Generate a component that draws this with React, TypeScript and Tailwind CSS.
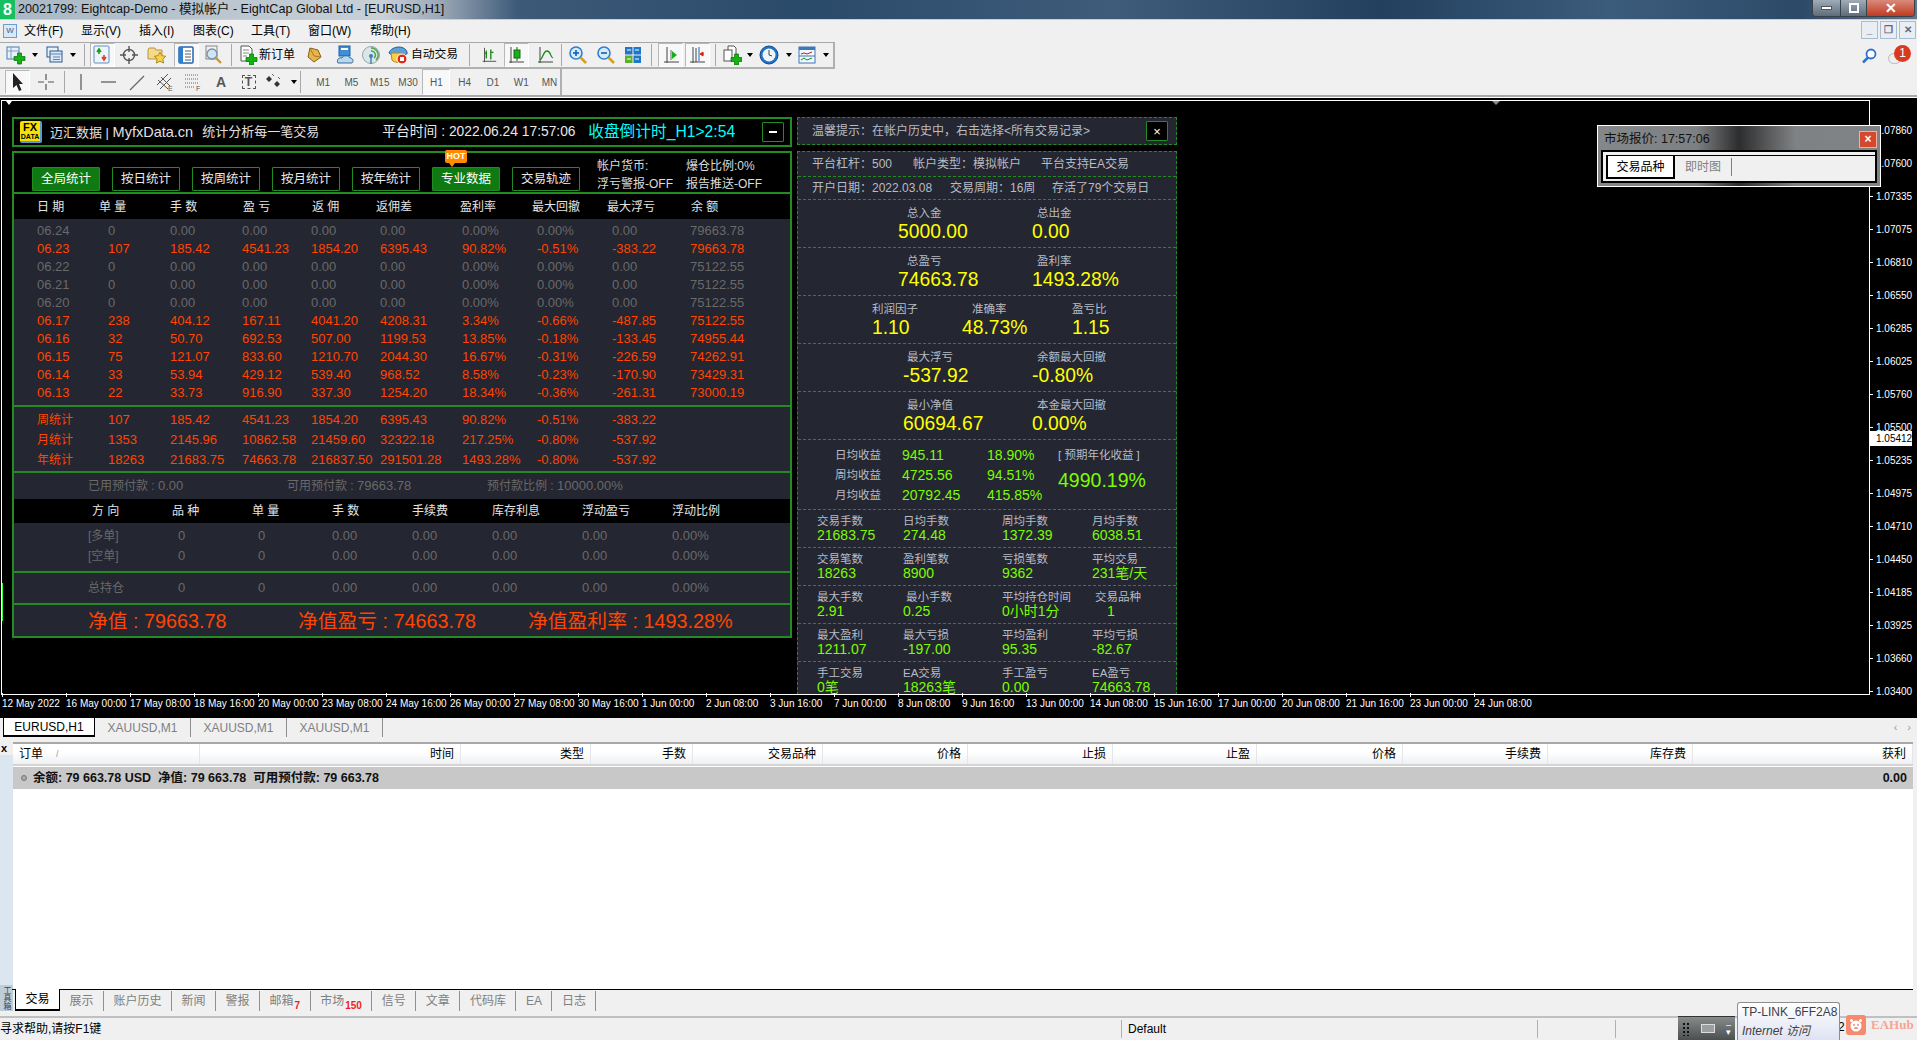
import React from "react";

function Dd() {
  return <div className="w-0 h-0 border-x-[3px] border-x-transparent border-t-[4px] border-t-black" />;
}
function Sep() {
  return <div className="w-px h-[22px] bg-[#a8a8a8]" />;
}
function Slot({ cls, active, children }: { cls: string; active?: boolean; children?: React.ReactNode }) {
  return (
    <div className={`${cls} h-full flex items-center justify-center shrink-0`}>
      {active ? (
        <div className="w-[25px] h-[24px] flex items-center justify-center border border-t-[#b8b8b8] border-l-[#b8b8b8] border-r-white border-b-white bg-[#f8f8f8]">{children}</div>
      ) : children}
    </div>
  );
}
const Ico = ({ children, s = 20 }: { children: React.ReactNode; s?: number }) => (
  <svg width={s} height={s} viewBox="0 0 20 20" fill="none">{children}</svg>
);
const Plus = ({ x = 8, y = 8 }: { x?: number; y?: number }) => (
  <path transform={`translate(${x} ${y})`} d="M3.5 0h4v3.5H11v4H7.5V11h-4V7.5H0v-4h3.5z" fill="#12b312" stroke="#0a6a0a" strokeWidth=".7" />
);
const IChartAdd = () => (
  <Ico><rect x="1" y="2" width="12" height="12" fill="#e8f0f8" stroke="#4a7ab0" /><path d="M1 6h12M5 2v12" stroke="#7aa0c8" /><Plus x={8} y={8} /></Ico>
);
const IProfiles = () => (
  <Ico><rect x="2" y="2" width="11" height="10" fill="#e8f0f8" stroke="#2a5a90" /><rect x="5" y="6" width="12" height="11" fill="#dce8f4" stroke="#2a5a90" /><path d="M5 9h12M8 12h7M8 14.5h7" stroke="#5a85b5" /></Ico>
);
const IMarket = () => (
  <Ico><rect x="2" y="1" width="15" height="17" rx="1" fill="#eef4fb" stroke="#5f8fc0" /><path d="M7 5v4M5 7l2-3 2 3" stroke="#16a016" strokeWidth="1.6" /><path d="M12 14v-4M10 12l2 3 2-3" stroke="#e0401a" strokeWidth="1.6" /></Ico>
);
const ICross = () => (
  <Ico><circle cx="10" cy="10" r="5.5" stroke="#555" strokeWidth="1.4" /><path d="M10 1v6M10 13v6M1 10h6M13 10h6" stroke="#555" strokeWidth="1.4" /></Ico>
);
const IFolderStar = () => (
  <Ico><path d="M1 5l1-2h6l1 2h6v9H1z" fill="#f4d98a" stroke="#b99440" /><path d="M13 7l1.8 3.7 4 .6-2.9 2.8.7 4L13 16.2 9.400 18.100l.7-4-2.900-2.800 4-.6z" fill="#f6d24a" stroke="#b28a1e" /></Ico>
);
const INav = () => (
  <Ico><rect x="3" y="2" width="14" height="16" rx="1" fill="#fff" stroke="#1f66b0" strokeWidth="1.5" /><rect x="3" y="2" width="4" height="16" fill="#2f7fd0" /><path d="M9 6h6M9 9h6M9 12h6M9 15h6" stroke="#5a5a5a" /></Ico>
);
const ITester = () => (
  <Ico><rect x="3" y="1" width="11" height="13" fill="#f0f0f0" stroke="#888" /><circle cx="9" cy="9" r="5" fill="#cfe4f5" stroke="#7a8ea0" strokeWidth="1.3" /><path d="M13 13l5 5" stroke="#c79a2a" strokeWidth="2.400" /></Ico>
);
const IOrder = () => (
  <Ico><path d="M3 1h8l3 3v12H3z" fill="#fff" stroke="#555" /><path d="M5 5h6M5 8h6M5 11h4" stroke="#888" /><Plus x={8} y={9} /></Ico>
);
const IDiamond = () => (
  <Ico><path d="M6 3l8 2 3 7-7 5-6-5z" fill="#e3b54a" stroke="#8a5e14" /><path d="M6 3l4 8 7 1" stroke="#a97a20" /></Ico>
);
const IChat = () => (
  <Ico><rect x="4" y="1" width="11" height="10" fill="#3f8fd8" stroke="#1f5fa0" /><rect x="6" y="3" width="7" height="2" fill="#fff" /><path d="M3 18c-2-3 1-6 4-5 1-3 7-3 8 0 3 0 4 3 2 5z" fill="#b8d8f0" stroke="#3a6a9a" /></Ico>
);
const ISignal = () => (
  <Ico><circle cx="10" cy="10" r="8.500" fill="#dbe6e6" stroke="#8fa8a8" /><path d="M10 3a7 7 0 0 1 5 12M10 6a4 4 0 0 1 3 7" stroke="#4ea04e" strokeWidth="1.4" /><circle cx="10" cy="11" r="2" fill="#2f7fd0" /><path d="M10 11v8" stroke="#4a80b8" strokeWidth="1.5" /></Ico>
);
const IAuto = () => (
  <Ico><path d="M1 8c1-4 6-6 10-6s7 2 8 5-3 3-4 3H4z" fill="#5aa0dc" stroke="#2a5f90" /><path d="M3 8l1 7c2 3 8 3 10 0V8z" fill="#f6cf4a" stroke="#b38a1a" /><circle cx="14" cy="14" r="5" fill="#e02818" stroke="#fff" /><rect x="12" y="12" width="4" height="4" fill="#fff" /></Ico>
);
const IBars = () => (
  <Ico><path d="M3 17h15M5 2v16" stroke="#444" /><path d="M7 14V5M12 15V4M7 8h-2M12 7h3" stroke="#148a14" strokeWidth="1.5" /></Ico>
);
const ICandle = () => (
  <Ico><path d="M3 17h15M5 2v16" stroke="#444" /><path d="M11 2v14" stroke="#146014" /><rect x="8" y="5" width="6" height="8" fill="#18b018" stroke="#0e6a0e" /></Ico>
);
const ILine = () => (
  <Ico><path d="M3 17h15M5 2v16" stroke="#444" /><path d="M5 15c3-1 3-9 7-9s3 6 6 7" stroke="#148a14" strokeWidth="1.3" /></Ico>
);
const IZoom = ({ plus }: { plus?: boolean }) => (
  <Ico><circle cx="8" cy="8" r="6" fill="#d6ebfa" stroke="#2f7fd0" strokeWidth="1.6" /><path d="M5 8h6" stroke="#1060b0" strokeWidth="1.6" />{plus && <path d="M8 5v6" stroke="#1060b0" strokeWidth="1.6" />}<path d="M12.500 12.500l5.500 5.500" stroke="#d6a020" strokeWidth="2.600" /></Ico>
);
const IGrid = () => (
  <Ico><rect x="2" y="2" width="7.500" height="7.500" fill="#1f77c8" /><rect x="10.500" y="2" width="7.500" height="7.500" fill="#1f77c8" /><rect x="2" y="10.500" width="7.500" height="7.500" fill="#5ab02a" /><rect x="10.500" y="10.500" width="7.500" height="7.500" fill="#1f77c8" /><path d="M4 5h4M12 5h4M4 14h4M12 14h4" stroke="#fff" /></Ico>
);
const IAxisRight = () => (
  <Ico><path d="M3 17h15M6 2v16" stroke="#444" /><path d="M10 5v10" stroke="#666" /><path d="M11 6l5 4-5 4z" fill="#18b018" /></Ico>
);
const IAxisShift = () => (
  <Ico><path d="M3 17h15M6 2v16M9 3v14" stroke="#444" /><path d="M12 2v14" stroke="#1f66b0" /><path d="M17 9h-3M16 7l-3 2 3 2z" fill="#d02810" stroke="#d02810" /></Ico>
);
const ICopy = () => (
  <Ico><path d="M6 1h6l2 2v11H6z" fill="#fff" stroke="#555" /><rect x="2" y="5" width="8" height="11" fill="#fff" stroke="#555" /><Plus x={9} y={9} /></Ico>
);
const IClock = () => (
  <Ico><circle cx="10" cy="10" r="9" fill="#1f72c8" stroke="#0d4a90" /><circle cx="10" cy="10" r="6.500" fill="#eef4fa" /><path d="M10 5v5l3 1" stroke="#444" /></Ico>
);
const ITemplate = () => (
  <Ico><rect x="2" y="2" width="16" height="16" fill="#f4f8fc" stroke="#3a78b8" /><rect x="2" y="2" width="16" height="3" fill="#3a78b8" /><path d="M2 11h16" stroke="#3a78b8" /><path d="M4 9l3-1 3 1 5-2" stroke="#c02010" /><path d="M4 15l3-2 3 2 5-2" stroke="#149014" /></Ico>
);
const IPointer = () => (
  <svg width="12" height="18" viewBox="0 0 12 18"><path d="M1 0v15l3.500-3 2.500 6 2.500-1-2.500-6H11z" fill="#222" /></svg>
);
const ICrossThin = () => (
  <Ico><path d="M10 2v6M10 12v6M2 10h6M12 10h6" stroke="#555" strokeWidth="1.200" /></Ico>
);
const IVLine = () => <Ico><path d="M10 2v16" stroke="#555" strokeWidth="1.200" /></Ico>;
const IHLine = () => <Ico><path d="M2 10h15" stroke="#555" strokeWidth="1.200" /></Ico>;
const ITrend = () => <Ico><path d="M3 18L17 4" stroke="#666" strokeWidth="1.200" /></Ico>;
const IChannel = () => (
  <Ico><path d="M2 13L13 2M5 17L16 6M3 8l10 9M6 5l9 9" stroke="#555" /><text x="13" y="19" fontSize="7" fill="#555" fontFamily="Liberation Sans">E</text></Ico>
);
const IFibo = () => (
  <Ico><path d="M2 3h14M2 7h14M2 11h14M2 15h10" stroke="#666" strokeDasharray="1 1" /><text x="13" y="19" fontSize="7" fill="#555" fontFamily="Liberation Sans">F</text></Ico>
);
const IMore = () => (
  <Ico><path d="M4 4l3 3-3 3-3-3zM12 9l3 3-3 3-3-3z" fill="#333" /><path d="M7 2l2 2M13 5l2 2" stroke="#666" /></Ico>
);

function Toolbar1() {
  return (
    <div className="h-[27px] w-[835px] pl-[4px] flex items-center border-t border-t-[#a8a8a8] border-b-2 border-b-[#b0b0b0] border-r-2 border-r-[#b0b0b0]">
      <Slot cls="w-[24px]"><IChartAdd /></Slot>
      <Slot cls="w-[14px]"><Dd /></Slot>
      <Slot cls="w-[25px]"><IProfiles /></Slot>
      <Slot cls="w-[12px]"><Dd /></Slot>
      <Slot cls="w-[10px]"><Sep /></Slot>
      <Slot cls="w-[26px]" active><IMarket /></Slot>
      <Slot cls="w-[28px]"><ICross /></Slot>
      <Slot cls="w-[28px]"><IFolderStar /></Slot>
      <Slot cls="w-[30px]" active><INav /></Slot>
      <Slot cls="w-[24px]"><ITester /></Slot>
      <Slot cls="w-[12px]"><Sep /></Slot>
      <Slot cls="w-[22px]"><IOrder /></Slot>
      <Slot cls="w-[36px] text-[12px] text-black"><span className="whitespace-nowrap">新订单</span></Slot>
      <Slot cls="w-[38px]"><IDiamond /></Slot>
      <Slot cls="w-[24px]"><IChat /></Slot>
      <Slot cls="w-[28px]"><ISignal /></Slot>
      <Slot cls="w-[26px]"><IAuto /></Slot>
      <Slot cls="w-[47px] text-[11.800px] text-black"><span className="whitespace-nowrap">自动交易</span></Slot>
      <Slot cls="w-[22px]"><Sep /></Slot>
      <Slot cls="w-[18px]"><IBars /></Slot>
      <Slot cls="w-[36px]" active><ICandle /></Slot>
      <Slot cls="w-[22px]"><ILine /></Slot>
      <Slot cls="w-[10px]"><Sep /></Slot>
      <Slot cls="w-[24px]"><IZoom plus /></Slot>
      <Slot cls="w-[32px]"><IZoom /></Slot>
      <Slot cls="w-[22px]"><IGrid /></Slot>
      <Slot cls="w-[14px]"><Sep /></Slot>
      <Slot cls="w-[25px]" active><IAxisRight /></Slot>
      <Slot cls="w-[28px]" active><IAxisShift /></Slot>
      <Slot cls="w-[8px]"><Sep /></Slot>
      <Slot cls="w-[26px]"><ICopy /></Slot>
      <Slot cls="w-[9px]"><Dd /></Slot>
      <Slot cls="w-[30px]"><IClock /></Slot>
      <Slot cls="w-[9px]"><Dd /></Slot>
      <Slot cls="w-[28px]"><ITemplate /></Slot>
      <Slot cls="w-[9px]"><Dd /></Slot>
    </div>
  );
}

function Toolbar2() {
  const periods = ["M1", "M5", "M15", "M30", "H1", "H4", "D1", "W1", "MN"];
  return (
    <div className="h-[26px] w-[562px] pl-[4px] flex items-center border-r-2 border-r-[#b0b0b0]">
      <Slot cls="w-[27px]" active><IPointer /></Slot>
      <Slot cls="w-[30px]"><ICrossThin /></Slot>
      <Slot cls="w-[6px]"><Sep /></Slot>
      <Slot cls="w-[28px]"><IVLine /></Slot>
      <Slot cls="w-[28px]"><IHLine /></Slot>
      <Slot cls="w-[28px]"><ITrend /></Slot>
      <Slot cls="w-[27px]"><IChannel /></Slot>
      <Slot cls="w-[29px]"><IFibo /></Slot>
      <Slot cls="w-[28px] text-[14px] text-[#555] font-bold"><span>A</span></Slot>
      <Slot cls="w-[27px]"><span className="w-[14px] h-[14px] border border-dashed border-[#555] text-[12px] leading-[12px] text-center font-bold text-[#555]">T</span></Slot>
      <Slot cls="w-[26px]"><IMore /></Slot>
      <Slot cls="w-[12px]"><Dd /></Slot>
      <Slot cls="w-[9px] justify-start"><Sep /></Slot>
      {periods.map((p) => (
        <div key={p} className={`w-[28.300px] h-full flex items-center justify-center shrink-0 text-[10px] text-[#555] ${p === "H1" ? "border border-t-[#b8b8b8] border-l-[#b8b8b8] border-r-white border-b-white bg-[#f8f8f8]" : ""}`}>{p}</div>
      ))}
    </div>
  );
}

const prices = ["1.07860", "1.07600", "1.07335", "1.07075", "1.06810", "1.06550", "1.06285", "1.06025", "1.05760", "1.05500", "1.05235", "1.04975", "1.04710", "1.04450", "1.04185", "1.03925", "1.03660", "1.03400"];
const times = ["12 May 2022", "16 May 00:00", "17 May 08:00", "18 May 16:00", "20 May 00:00", "23 May 08:00", "24 May 16:00", "26 May 00:00", "27 May 08:00", "30 May 16:00", "1 Jun 00:00", "2 Jun 08:00", "3 Jun 16:00", "7 Jun 00:00", "8 Jun 08:00", "9 Jun 16:00", "13 Jun 00:00", "14 Jun 08:00", "15 Jun 16:00", "17 Jun 00:00", "20 Jun 08:00", "21 Jun 16:00", "23 Jun 00:00", "24 Jun 08:00"];

const rows = [
  ["06.24", "0", "0.00", "0.00", "0.00", "0.00", "0.00%", "0.00%", "0.00", "79663.78"],
  ["06.23", "107", "185.42", "4541.23", "1854.20", "6395.43", "90.82%", "-0.51%", "-383.22", "79663.78"],
  ["06.22", "0", "0.00", "0.00", "0.00", "0.00", "0.00%", "0.00%", "0.00", "75122.55"],
  ["06.21", "0", "0.00", "0.00", "0.00", "0.00", "0.00%", "0.00%", "0.00", "75122.55"],
  ["06.20", "0", "0.00", "0.00", "0.00", "0.00", "0.00%", "0.00%", "0.00", "75122.55"],
  ["06.17", "238", "404.12", "167.11", "4041.20", "4208.31", "3.34%", "-0.66%", "-487.85", "75122.55"],
  ["06.16", "32", "50.70", "692.53", "507.00", "1199.53", "13.85%", "-0.18%", "-133.45", "74955.44"],
  ["06.15", "75", "121.07", "833.60", "1210.70", "2044.30", "16.67%", "-0.31%", "-226.59", "74262.91"],
  ["06.14", "33", "53.94", "429.12", "539.40", "968.52", "8.58%", "-0.23%", "-170.90", "73429.31"],
  ["06.13", "22", "33.73", "916.90", "337.30", "1254.20", "18.34%", "-0.36%", "-261.31", "73000.19"],
];
const sums = [
  ["周统计", "107", "185.42", "4541.23", "1854.20", "6395.43", "90.82%", "-0.51%", "-383.22"],
  ["月统计", "1353", "2145.96", "10862.58", "21459.60", "32322.18", "217.25%", "-0.80%", "-537.92"],
  ["年统计", "18263", "21683.75", "74663.78", "216837.50", "291501.28", "1493.28%", "-0.80%", "-537.92"],
];
const gridCols = "grid grid-cols-[71px_62px_72px_69px_69px_82px_75px_75px_78px_1fr]";
const tabsBtn = ["全局统计", "按日统计", "按周统计", "按月统计", "按年统计", "专业数据", "交易轨迹"];

function Divider() {
  return <div className="h-[2px] bg-[#228B22] shrink-0" />;
}

function StatsPanel() {
  return (
    <div className="absolute left-[10px] top-[16px] w-[780px] flex flex-col gap-[4px] text-[13px] leading-[18px]">
      <div className="h-[30px] border-2 border-[#228B22] bg-black flex items-center relative">
        <div className="ml-[6px] w-[22px] h-[22px] rounded-[2px] bg-[#f5e000] border-r-2 border-b-2 border-r-[#5a9ad8] border-b-[#5a9ad8] flex flex-col items-center justify-center text-black font-bold leading-none">
          <span className="text-[11px] leading-[11px]">FX</span>
          <span className="text-[7px] leading-[8px]">DATA</span>
        </div>
        <span className="ml-[8px] text-[13px] text-[#e0e0e0] whitespace-nowrap">迈汇数据 | <span className="text-[14.500px]">MyfxData.cn</span></span>
        <span className="ml-[9px] text-[13px] text-[#e0e0e0] whitespace-nowrap">统计分析每一笔交易</span>
        <span className="ml-[63px] w-[206px] text-[13.800px] text-[#e8e8e8] whitespace-nowrap">平台时间 : 2022.06.24 17:57:06</span>
        <span className="text-[15.700px] text-[#00ffff] whitespace-nowrap">收盘倒计时_H1&gt;2:54</span>
        <div className="absolute left-[748px] top-[3px] w-[22px] h-[20px] border border-[#228B22] rounded-[1px] flex items-center justify-center">
          <div className="w-[8px] h-[2px] bg-white" />
        </div>
      </div>

      <div className="border-2 border-[#228B22] bg-[#242631] flex flex-col">
        <div className="h-[39px] bg-black relative flex items-end gap-[12px] pl-[18px] pb-[1px]">
          {tabsBtn.map((t, i) => (
            <div key={t} className={`w-[68px] h-[24px] shrink-0 flex items-center justify-center text-[12.500px] rounded-[1px] border border-[#228B22] text-[#e8e8e8] ${i === 0 || i === 5 ? "bg-[#0f7a12] text-white" : "bg-black"}`}>{t}</div>
          ))}
          <div className="absolute left-[431px] top-[-3px] w-[22px] h-[13px] rounded-[2px] bg-[#ff8c00] text-white text-[9px] leading-[13px] text-center font-bold">HOT</div>
          <div className="absolute left-[435px] top-[10px] w-0 h-0 border-x-[3px] border-x-transparent border-t-[4px] border-t-[#ff8c00]" />
          <div className="absolute left-[583px] top-[4px] text-[12px] leading-[18px] text-[#dcdcdc] whitespace-nowrap">帐户货币:<br />浮亏警报-OFF</div>
          <div className="absolute left-[672px] top-[4px] text-[12px] leading-[18px] text-[#dcdcdc] whitespace-nowrap">爆仓比例:0%<br />报告推送-OFF</div>
        </div>
        <Divider />
        <div className="h-[25px] bg-black pl-[23px] grid grid-cols-[62px_71px_73px_69px_64px_84px_72px_75px_84px_1fr] items-center text-[12px] text-[#e4e4e4]">
          {["日 期", "单 量", "手 数", "盈 亏", "返 佣", "返佣差", "盈利率", "最大回撤", "最大浮亏", "余 额"].map((h) => <span key={h}>{h}</span>)}
        </div>
        <div className="pt-[3px] pb-[3px] pl-[23px]">
          {rows.map((r) => {
            const zero = r[1] === "0";
            return (
              <div key={r[0]} className={`${gridCols} h-[18px] items-center ${zero ? "text-[#696969]" : "text-[#ff4500]"}`}>
                {r.map((c, i) => <span key={i}>{c}</span>)}
              </div>
            );
          })}
        </div>
        <Divider />
        <div className="pt-[3px] pb-[1px] pl-[23px]">
          {sums.map((r) => (
            <div key={r[0]} className={`${gridCols} h-[20px] items-center text-[#ff4500]`}>
              {r.map((c, i) => <span key={i} className={i === 0 ? "text-[12px]" : ""}>{c}</span>)}
            </div>
          ))}
        </div>
        <Divider />
        <div className="h-[26px] flex items-center pl-[74px] text-[#696969]">
          <span className="w-[199px] text-[12px]">已用预付款 : <span className="text-[13px]">0.00</span></span>
          <span className="w-[200px] text-[12px]">可用预付款 : <span className="text-[13px]">79663.78</span></span>
          <span className="text-[12px]">预付款比例 : <span className="text-[13px]">10000.00%</span></span>
        </div>
        <div className="h-[24px] bg-black pl-[74px] grid grid-cols-[84px_80px_80px_80px_80px_90px_90px_1fr] items-center text-[12px] text-[#e4e4e4]">
          {["方 向", "品 种", "单 量", "手 数", "手续费", "库存利息", "浮动盈亏", "浮动比例"].map((h, i) => <span key={h} className={i === 0 ? "ml-[4px]" : ""}>{h}</span>)}
        </div>
        <div className="pt-[3px] pb-[5px] pl-[74px] text-[#696969]">
          {["[多单]", "[空单]"].map((l) => (
            <div key={l} className="grid grid-cols-[84px_80px_80px_80px_80px_90px_90px_1fr] h-[20px] items-center">
              <span className="text-[12px]">{l}</span><span className="ml-[6px]">0</span><span className="ml-[6px]">0</span><span>0.00</span><span>0.00</span><span>0.00</span><span>0.00</span><span>0.00%</span>
            </div>
          ))}
        </div>
        <Divider />
        <div className="h-[30px] pl-[74px] text-[#696969] grid grid-cols-[84px_80px_80px_80px_80px_90px_90px_1fr] items-center">
          <span className="text-[12px]">总持仓</span><span className="ml-[6px]">0</span><span className="ml-[6px]">0</span><span>0.00</span><span>0.00</span><span>0.00</span><span>0.00</span><span>0.00%</span>
        </div>
        <Divider />
        <div className="h-[31px] flex items-center pl-[74px] text-[19.800px] leading-[24px] text-[#ff4500] whitespace-nowrap">
          <span className="w-[210px]">净值 : 79663.78</span>
          <span className="w-[230px]">净值盈亏 : 74663.78</span>
          <span>净值盈利率 : 1493.28%</span>
        </div>
      </div>
    </div>
  );
}

const lab = "text-[11.500px] leading-[14px] text-[#b8bcc4] whitespace-nowrap";
const big = "text-[19.300px] leading-[24px] text-[#ffff00] whitespace-nowrap";
const small = "text-[14px] leading-[14px] text-[#7cfc00] whitespace-nowrap";
const rowLine = "border-b border-dashed border-b-[#228B22]";

function Big2({ a, b, c, d, cls }: { a: string; b: string; c: string; d: string; cls: string }) {
  return (
    <div className={`h-[48px] ${rowLine} pt-[6px] pl-[100px] grid grid-cols-[134px_1fr]`}>
      <div><div className={`${lab} ml-[9px]`}>{a}</div><div className={`${big} ${cls}`}>{b}</div></div>
      <div><div className={`${lab} ml-[5px]`}>{c}</div><div className={big}>{d}</div></div>
    </div>
  );
}

function Small4({ items, last }: { items: [string, string][]; last?: boolean }) {
  return (
    <div className={`h-[38px] pt-[4px] pl-[19px] grid grid-cols-[86px_99px_90px_1fr] ${last ? "" : rowLine}`}>
      {items.map(([l, v]) => (
        <div key={l}>
          <div className={`${lab} ${l === "最小手数" ? "ml-[3px]" : ""} ${l === "交易品种" ? "ml-[3px]" : ""}`}>{l}</div>
          <div className={`${small} ${l === "交易品种" ? "ml-[15px]" : ""}`}>{v}</div>
        </div>
      ))}
    </div>
  );
}

function InfoPanel() {
  return (
    <div className="absolute left-[795px] top-[16px] w-[380px] text-[12px] flex flex-col gap-[6px]">
      <div className="h-[28px] bg-[#242631] border border-dashed border-[#228B22] pl-[14px] flex items-center relative text-[#b8bcc4]">
        <span className="text-[12px]">温馨提示：在帐户历史中，右击选择&lt;所有交易记录&gt;</span>
        <div className="absolute left-[348px] top-[3px] w-[22px] h-[20px] bg-black border border-[#228B22] rounded-[1px] flex items-center justify-center text-white text-[13px] leading-none">×</div>
      </div>
      <div className="bg-[#242631] border-x border-t border-dashed border-[#228B22]">
        <div className={`h-[25px] ${rowLine} pl-[14px] flex items-center text-[#b8bcc4]`}>
          <span className="w-[101px]">平台杠杆：500</span><span className="w-[128px]">帐户类型：模拟帐户</span><span>平台支持EA交易</span>
        </div>
        <div className={`h-[23px] ${rowLine} pl-[14px] flex items-center text-[#b8bcc4]`}>
          <span className="w-[138px]">开户日期：2022.03.08</span><span className="w-[102px]">交易周期：16周</span><span>存活了79个交易日</span>
        </div>
        <Big2 a="总入金" b="5000.00" c="总出金" d="0.00" cls="" />
        <Big2 a="总盈亏" b="74663.78" c="盈利率" d="1493.28%" cls="" />
        <div className={`h-[48px] ${rowLine} pt-[2px]`}>
          <div className="pl-[74px] grid grid-cols-[90px_110px_1fr]">
            <div><div className={`${lab} mt-[4px]`}>利润因子</div><div className={big}>1.10</div></div>
            <div><div className={`${lab} mt-[4px] ml-[10px]`}>准确率</div><div className={big}>48.73%</div></div>
            <div><div className={`${lab} mt-[4px]`}>盈亏比</div><div className={big}>1.15</div></div>
          </div>
        </div>
        <Big2 a="最大浮亏" b="-537.92" c="余额最大回撤" d="-0.80%" cls="ml-[5px]" />
        <Big2 a="最小净值" b="60694.67" c="本金最大回撤" d="0.00%" cls="ml-[5px]" />
        <div className={`h-[70px] ${rowLine} pt-[5px] flex`}>
          <div className="grid grid-cols-[83px_85px_71px] auto-rows-[20px] items-center">
            {[["日均收益", "945.11", "18.90%"], ["周均收益", "4725.56", "94.51%"], ["月均收益", "20792.45", "415.85%"]].map(([a, b, c]) => (
              <React.Fragment key={a}>
                <span className={`${lab} text-right`}>{a}</span>
                <span className={`${small} ml-[21px]`}>{b}</span>
                <span className={`${small} ml-[21px]`}>{c}</span>
              </React.Fragment>
            ))}
          </div>
          <div className="flex flex-col ml-[21px]">
            <span className={`${lab} h-[20px] flex items-center`}>[ 预期年化收益 ]</span>
            <span className="text-[19.500px] leading-[30px] text-[#7cfc00] whitespace-nowrap">4990.19%</span>
          </div>
        </div>
        <Small4 items={[["交易手数", "21683.75"], ["日均手数", "274.48"], ["周均手数", "1372.39"], ["月均手数", "6038.51"]]} />
        <Small4 items={[["交易笔数", "18263"], ["盈利笔数", "8900"], ["亏损笔数", "9362"], ["平均交易", "231笔/天"]]} />
        <Small4 items={[["最大手数", "2.91"], ["最小手数", "0.25"], ["平均持仓时间", "0小时1分"], ["交易品种", "1"]]} />
        <Small4 items={[["最大盈利", "1211.07"], ["最大亏损", "-197.00"], ["平均盈利", "95.35"], ["平均亏损", "-82.67"]]} />
        <Small4 last items={[["手工交易", "0笔"], ["EA交易", "18263笔"], ["手工盈亏", "0.00"], ["EA盈亏", "74663.78"]]} />
      </div>
    </div>
  );
}

function MarketWatch() {
  return (
    <div className="absolute left-[1597px] top-[27px] w-[284px] h-[62px] border border-white bg-[linear-gradient(90deg,#85888a_0%,#7d8082_35%,#2c2d2f_50%,#7f8284_70%,#808385_100%)] p-[3px] flex flex-col">
      <div className="h-[21px] flex items-center justify-between pl-[3px]">
        <span className="text-[12.500px] text-[#111]">市场报价: 17:57:06</span>
        <div className="w-[18px] h-[17px] bg-[#d5482e] border border-[#f0b0a0] text-white text-[12px] leading-[14px] text-center font-bold">×</div>
      </div>
      <div className="h-[33px] border-2 border-black bg-[#f0f0f0] pl-[3px] pt-[3px]">
        <div className="flex h-[23px] border-t border-t-black items-stretch">
          <div className="w-[69px] h-[23px] bg-white border-l-2 border-r-2 border-b-2 border-black text-[12px] flex items-center justify-center text-black">交易品种</div>
          <div className="w-[56px] text-[12px] flex items-center justify-center text-[#808080]">即时图</div>
          <div className="w-px h-[18px] mt-[2px] bg-[#808080]" />
        </div>
      </div>
    </div>
  );
}

function Chart() {
  return (
    <div className="relative h-[618px] bg-black flex flex-col shrink-0 text-white">
      <div className="flex h-[596px] pt-[2px] shrink-0">
        <div className="relative ml-px w-[1869px] h-[595px] border border-white overflow-hidden shrink-0">
          <div className="absolute left-[4px] top-0 w-0 h-0 border-x-[3px] border-x-transparent border-t-[4px] border-t-white" />
          <div className="absolute left-[1490px] top-0 w-0 h-0 border-x-[4px] border-x-transparent border-t-[4px] border-t-[#888]" />
          <div className="absolute left-0 top-[482px] w-px h-[38px] bg-[#33ff33]" />
          <StatsPanel />
          <InfoPanel />
        </div>
        <div className="relative flex-1 pt-[14px]">
          {prices.map((p) => (
            <div key={p} className="h-[33px] flex items-center text-[10px] leading-none">
              <span className="w-[3px] h-px bg-white mr-[3px]" />
              <span>{p}</span>
            </div>
          ))}
          <div className="absolute left-0 top-[331px] w-[42px] h-[15px] bg-white text-black text-[10px] leading-[15px] pl-[6px]">1.05412</div>
        </div>
      </div>
      <div className="h-[22px] pl-[2px] flex text-[10px] leading-[14px] shrink-0">
        {times.map((t) => (
          <div key={t} className="w-[64px] shrink-0 relative pt-[3px] whitespace-nowrap">
            <span className="absolute left-0 -top-[1px] w-px h-[4px] bg-white" />
            {t}
          </div>
        ))}
      </div>
      <MarketWatch />
    </div>
  );
}

function ChartTabs() {
  return (
    <div className="h-[22px] bg-[#f0f0f0] flex border-t-[2px] border-t-black pl-[3px] text-[12px] shrink-0">
      <div className="w-[92px] h-[19px] bg-white border-x border-b-2 border-x-black border-b-black flex items-center justify-center text-black">EURUSD,H1</div>
      {["XAUUSD,M1", "XAUUSD,M1", "XAUUSD,M1"].map((t, i) => (
        <div key={i} className="w-[96px] h-[19px] flex items-center justify-center text-[#808080] border-r border-r-[#909090]">{t}</div>
      ))}
      <div className="ml-auto mr-[6px] flex items-center gap-[10px] text-[#999] text-[11px] h-[18px]"><span>‹</span><span>›</span></div>
    </div>
  );
}

const headCols = [
  ["订单", "w-[187px] text-left pl-[6px]"],
  ["时间", "w-[261px] text-right"],
  ["类型", "w-[130px] text-right"],
  ["手数", "w-[102px] text-right"],
  ["交易品种", "w-[130px] text-right"],
  ["价格", "w-[145px] text-right"],
  ["止损", "w-[145px] text-right"],
  ["止盈", "w-[144px] text-right"],
  ["价格", "w-[146px] text-right"],
  ["手续费", "w-[145px] text-right"],
  ["库存费", "w-[145px] text-right"],
  ["获利", "flex-1 text-right"],
];
const bottomTabs: [string, string?][] = [["展示"], ["账户历史"], ["新闻"], ["警报"], ["邮箱", "7"], ["市场", "150"], ["信号"], ["文章"], ["代码库"], ["EA"], ["日志"]];

function Terminal() {
  return (
    <div className="flex-1 flex bg-[#f0f0f0] min-h-0 pr-[4px]">
      <div className="w-[13px] shrink-0 flex flex-col">
        <div className="h-[17px] text-[11px] leading-[14px] font-bold text-black pl-[1px] pt-[3px]">x</div>
        <div className="flex-1 bg-[#dbe6f1]" />
        <div className="h-[26px] bg-[#c0ccd8] text-[8px] leading-[11px] text-[#444] [writing-mode:vertical-rl] flex items-center justify-center">工具箱</div>
        <div className="h-[5px]" />
      </div>
      <div className="flex-1 flex flex-col min-w-0">
        <div className="h-[4px]" />
        <div className="bg-white flex-1 flex flex-col border-t-2 border-t-[#a8a8a8] min-h-0">
          <div className="h-[22px] flex text-[12px] text-black bg-[linear-gradient(180deg,#ffffff_40%,#eef0f3_100%)] border-b-2 border-b-[#d4d4d4]">
            {headCols.map(([t, w], i) => (
              <div key={i} className={`${w} pr-[6px] border-r border-r-[#e4e6ea] leading-[20px] shrink-0 relative`}>
                {t}
                {i === 0 && <span className="absolute left-[43px] top-0 text-[9px] text-[#999]">/</span>}
              </div>
            ))}
          </div>
          <div className="h-[22px] mt-[1px] bg-[#c8c8c8] flex items-center text-[12.500px] font-bold text-[#111] relative pl-[8px]">
            <span className="w-[6px] h-[6px] rounded-full border border-[#777] bg-[#aaa] mr-[6px]" />
            <span>余额: 79 663.78 USD&nbsp;&nbsp;净值: 79 663.78&nbsp;&nbsp;可用预付款: 79 663.78</span>
            <span className="absolute right-[6px]">0.00</span>
          </div>
        </div>
        <div className="h-[27px] border-t border-t-black flex items-start text-[12px] -ml-px">
          <div className="w-[45px] h-[22px] bg-white border-x border-b-2 border-x-black border-b-black flex items-center justify-center text-black shrink-0 -mt-px ml-[3px]">交易</div>
          {bottomTabs.map(([t, n]) => (
            <div key={t} className="h-[20px] mt-[1px] px-[9.500px] flex items-center text-[#808080] border-r border-r-[#909090] shrink-0">
              {t}
              {n && <span className="text-[#ee1c25] font-bold text-[10px] self-end leading-[12px] ml-[1px] -mb-[1px]">{n}</span>}
            </div>
          ))}
        </div>
      </div>
    </div>
  );
}

function StatusBar() {
  return (
    <div className="h-[24px] bg-[#f0f0f0] border-t-2 border-t-[#c0c0c0] flex items-center text-[12px] text-black shrink-0 relative">
      <span className="w-[1121px] shrink-0">寻求帮助,请按F1键</span>
      <span className="w-px h-[18px] bg-[#b0b0b0]" />
      <span className="w-[415px] pl-[6px]">Default</span>
      <span className="w-px h-[18px] bg-[#b0b0b0]" />
      <span className="w-[77px]" />
      <span className="w-px h-[18px] bg-[#b0b0b0]" />
      <div className="absolute left-[1678px] -top-[2px] w-[57px] h-[24px] bg-[linear-gradient(180deg,#868b8c,#4b4f50)] border-t border-t-[#333] flex items-center justify-between px-[4px]">
        <span className="w-[8px] h-[14px] bg-[radial-gradient(circle,#111_1px,transparent_1.300px)] bg-[length:4px_4px]" />
        <span className="w-[14px] h-[9px] border border-[#ddd] bg-[#9aa0a2]" />
        <span className="text-white text-[9px] leading-[7px] text-center">–<br />▾</span>
      </div>
      <div className="absolute left-[1838px] top-0 text-[12px]">2 KB</div>
    </div>
  );
}

function Overlays() {
  return (
    <>
      <div className="absolute left-[1737px] top-[1002px] w-[103px] h-[38px] rounded-t-[3px] border border-[#8d8d8d] border-b-0 bg-[linear-gradient(180deg,#ffffff,#dfe2f3)] pl-[4px] text-[12px] leading-[19px] text-[#404040] whitespace-nowrap">
        <div>TP-LINK_6FF2A8</div>
        <div className="italic">Internet 访问</div>
      </div>
      <div className="absolute left-[1846px] top-[1015px] flex items-center gap-[5px]">
        <div className="w-[20px] h-[20px] rounded-[3px] bg-[#f58a6e] flex items-center justify-center">
          <svg width="16" height="16" viewBox="0 0 16 16"><circle cx="8" cy="9" r="5.500" fill="#fff" /><circle cx="3.500" cy="3.500" r="1.500" fill="#fff" /><circle cx="12.500" cy="3.500" r="1.500" fill="#fff" /><circle cx="6" cy="8" r="1" fill="#f58a6e" /><circle cx="10" cy="8" r="1" fill="#f58a6e" /><ellipse cx="8" cy="11" rx="2" ry="1" fill="#f58a6e" /></svg>
        </div>
        <span className="text-[13px] font-bold text-[#f7a593] font-['Liberation_Serif']">EAHub</span>
      </div>
    </>
  );
}

export default function App() {
  return (
    <div className="relative w-[1917px] h-[1040px] overflow-hidden flex flex-col bg-[#f0f0f0] font-['Liberation_Sans','Noto_Sans_CJK_SC',sans-serif]">
      <div className="h-[20px] shrink-0 border-b border-b-[#c4d0dc] flex items-center bg-[linear-gradient(90deg,#a8b8c4_0%,#c8d0d8_20%,#9aa8b6_23%,#3d5a78_27%,#2a4a6a_42%,#3f5c7a_58%,#23405e_72%,#3c5c7c_84%,#2c4a68_94%,#5d7890_100%)] relative">
        <div className="w-[15px] h-[19px] bg-[#16c060] text-white text-[16px] leading-[19px] font-bold text-center">8</div>
        <span className="ml-[3px] text-[12.600px] text-[#111] whitespace-nowrap">20021799: Eightcap-Demo - 模拟帐户 - EightCap Global Ltd - [EURUSD,H1]</span>
        <div className="absolute right-[2px] top-0 h-[17px] w-[103px] flex rounded-b-[4px] border border-t-0 border-[#39414a] overflow-hidden">
          <div className="w-[28px] bg-[linear-gradient(180deg,#a0acb8,#5e6c7a)] flex items-center justify-center border-r border-r-[#39414a]"><span className="w-[11px] h-[4px] bg-white border border-[#555]" /></div>
          <div className="w-[26px] bg-[linear-gradient(180deg,#a0acb8,#5e6c7a)] flex items-center justify-center border-r border-r-[#39414a]"><span className="w-[10px] h-[10px] border-2 border-white" /></div>
          <div className="flex-1 bg-[linear-gradient(180deg,#d88a7a,#c03a20)] flex items-center justify-center text-white font-bold text-[14px] leading-none">✕</div>
        </div>
      </div>
      <div className="h-[22px] shrink-0 flex items-center relative text-[12px] text-black">
        <div className="ml-[3px] w-[14px] h-[14px] bg-[#dbe9f7] border border-[#6f9ccc] text-[8px] leading-[12px] text-center text-[#2a5a90]">W</div>
        <div className="flex ml-[7px]">
          <span className="w-[57px]">文件(F)</span>
          <span className="w-[58px]">显示(V)</span>
          <span className="w-[54px]">插入(I)</span>
          <span className="w-[58px]">图表(C)</span>
          <span className="w-[57px]">工具(T)</span>
          <span className="w-[62px]">窗口(W)</span>
          <span>帮助(H)</span>
        </div>
        <div className="absolute right-[1px] top-[1px] flex gap-[2px]">
          {["_", "❐", "✕"].map((t) => (
            <div key={t} className="w-[17px] h-[18px] border border-[#a9bdd0] bg-[#e9eef4] text-[#667] text-[10px] leading-[15px] text-center font-bold">{t}</div>
          ))}
        </div>
      </div>
      <div className="relative shrink-0">
        <Toolbar1 />
        <div className="absolute left-[1860px] top-[5px]">
          <svg width="18" height="18" viewBox="0 0 18 18"><circle cx="11" cy="7" r="4.500" fill="#fff" stroke="#2f6fd0" strokeWidth="1.800" /><path d="M8 10.500L3 15.500" stroke="#2f6fd0" strokeWidth="2.500" /></svg>
        </div>
        <div className="absolute left-[1888px] top-[11px] w-[13px] h-[11px] rounded-full bg-[#eee] border border-[#bbb]" />
        <div className="absolute left-[1894px] top-[3px] w-[17px] h-[17px] rounded-full bg-[#d83a20] text-white text-[12px] leading-[17px] text-center">1</div>
      </div>
      <div className="shrink-0 h-[28px] border-b-2 border-b-[#a8a8a8]"><Toolbar2 /></div>
      <div className="h-px bg-white shrink-0" />
      <Chart />
      <ChartTabs />
      <Terminal />
      <StatusBar />
      <Overlays />
    </div>
  );
}
